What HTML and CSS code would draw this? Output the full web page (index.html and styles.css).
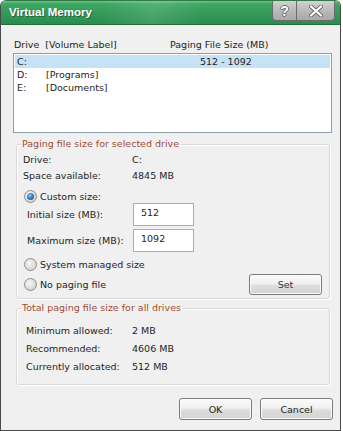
FILE: index.html
```html
<!DOCTYPE html>
<html lang="en">
<head>
<meta charset="UTF-8">
<title>Virtual Memory</title>
<link rel="stylesheet" href="styles.css">
</head>
<body>
<div class="window">
  <div class="titlebar">
    <span class="title">Virtual Memory</span>
    <div class="caption-btns">
      <span class="cbtn help">?</span>
      <span class="cbtn close">
        <svg width="16" height="12" viewBox="0 0 16 12">
          <path d="M3 1.5 L13 10.5 M13 1.5 L3 10.5" stroke="#6a6a6a" stroke-width="4" stroke-linecap="round"/>
          <path d="M3 1.5 L13 10.5 M13 1.5 L3 10.5" stroke="#fff" stroke-width="2.2" stroke-linecap="round"/>
        </svg>
      </span>
    </div>
  </div>

  <div class="client">
    <div class="list-head">
      <span class="col-drive">Drive&nbsp; [Volume Label]</span>
      <span class="col-size">Paging File Size (MB)</span>
    </div>
    <div class="listbox">
      <div class="row selected"><span class="c-drive">C:</span><span class="c-label"></span><span class="c-size">512 - 1092</span></div>
      <div class="row"><span class="c-drive">D:</span><span class="c-label">[Programs]</span><span class="c-size"></span></div>
      <div class="row"><span class="c-drive">E:</span><span class="c-label">[Documents]</span><span class="c-size"></span></div>
    </div>

    <fieldset class="group group-drive">
      <legend>Paging file size for selected drive</legend>
      <div class="info-row first"><span class="info-label">Drive:</span><span>C:</span></div>
      <div class="info-row"><span class="info-label">Space available:</span><span>4845 MB</span></div>
      <div class="radio-row custom"><span class="radio checked"></span><span>Custom size:</span></div>
      <div class="field-row"><span class="field-label">Initial size (MB):</span><span class="textbox">512</span></div>
      <div class="field-row second"><span class="field-label">Maximum size (MB):</span><span class="textbox">1092</span></div>
      <div class="radio-row system"><span class="radio"></span><span>System managed size</span></div>
      <div class="radio-row nopage">
        <span class="radio"></span><span>No paging file</span>
        <span class="button set-btn">Set</span>
      </div>
    </fieldset>

    <fieldset class="group group-total">
      <legend>Total paging file size for all drives</legend>
      <div class="total-row first"><span class="total-label">Minimum allowed:</span><span>2 MB</span></div>
      <div class="total-row"><span class="total-label">Recommended:</span><span>4606 MB</span></div>
      <div class="total-row"><span class="total-label">Currently allocated:</span><span>512 MB</span></div>
    </fieldset>

    <div class="dialog-buttons">
      <span class="button">OK</span>
      <span class="button">Cancel</span>
    </div>
  </div>
</div>
</body>
</html>
```

FILE: styles.css
```css
body {
  margin: 0;
  padding: 0;
  background-color: #ffffff;
  font-family: "DejaVu Sans", sans-serif;
  font-size: 9.5px;
  color: #1e1e1e;
}

.window {
  width: 341px;
  height: 431px;
  box-sizing: border-box;
  border: 1px solid #4a4a4a;
  border-top-color: #2f7a47;
  border-radius: 6px 6px 0 0;
  background-color: #f0f0f0;
  overflow: hidden;
}

.titlebar {
  height: 23px;
  display: flex;
  align-items: flex-start;
  justify-content: space-between;
  background: linear-gradient(100deg, rgba(255,255,255,0) 30%, rgba(255,255,255,0.12) 45%, rgba(255,255,255,0) 60%),
              linear-gradient(to bottom, #6cc58a 0%, #3ea862 12%, #33995a 55%, #2c8c4f 100%);
  border-bottom: 1px solid #23703f;
}

.title {
  font-family: "Liberation Sans", sans-serif;
  font-weight: bold;
  font-size: 11.5px;
  color: #ffffff;
  padding: 5px 0 0 8px;
  text-shadow: 1px 1px 0 rgba(0, 0, 0, 0.35);
}

.caption-btns {
  display: flex;
  margin-right: 5px;
}

.cbtn {
  height: 20px;
  box-sizing: border-box;
  display: flex;
  align-items: center;
  justify-content: center;
  background: linear-gradient(to bottom, #d2d2d2 0%, #b9b9b9 50%, #a9a9a9 100%);
  border: 1px solid #6b6b6b;
  border-top: none;
}

.help {
  width: 25px;
  border-radius: 0 0 0 4px;
  font-family: "Liberation Sans", sans-serif;
  font-weight: bold;
  font-size: 14px;
  color: #ffffff;
  text-shadow: -1px 0 #6a6a6a, 1px 0 #6a6a6a, 0 -1px #6a6a6a, 0 1px #6a6a6a;
}

.close {
  width: 38px;
  border-left: none;
  border-radius: 0 0 4px 0;
}

.client {
  padding: 14px 8px 0 12px;
}

.list-head {
  display: flex;
  height: 12px;
  line-height: 12px;
  padding-left: 1px;
}

.col-drive {
  width: 156px;
}

.listbox {
  margin-top: 2px;
  height: 80px;
  box-sizing: border-box;
  border: 1px solid #8c9db0;
  background-color: #ffffff;
  padding-top: 1px;
}

.row {
  display: flex;
  height: 13px;
  line-height: 13px;
  margin: 0 1px;
}

.row.selected {
  background-color: #c6e2f5;
}

.c-drive {
  width: 29px;
  padding-left: 2px;
}

.c-label {
  width: 154px;
}

.group {
  margin: 5px 2px 0 3px;
  padding: 0;
  border: 1px solid #dadada;
  border-radius: 3px;
  box-shadow: inset 1px 1px 0 #ffffff, 1px 1px 0 #ffffff;
}

.group legend {
  margin-left: 4px;
  padding: 0 1px;
  line-height: 12px;
  color: #9c4a30;
}

.info-row {
  display: flex;
  height: 16px;
  line-height: 16px;
  padding-left: 6px;
}

.info-row.first {
  margin-top: 2px;
}

.info-label {
  width: 109px;
}

.radio-row {
  display: flex;
  align-items: center;
  padding-left: 7px;
  height: 16px;
}

.radio-row.custom {
  height: 14px;
  margin-top: 5px;
}

.radio-row.system {
  margin-top: 4px;
}

.radio-row.nopage {
  height: 21px;
  margin-top: 2px;
  margin-bottom: 3px;
}

.radio {
  width: 11px;
  height: 11px;
  border: 1px solid #8e8e8e;
  border-radius: 50%;
  background: radial-gradient(circle at 40% 35%, #f6f6f6 0%, #d6d6d6 70%, #c4c4c4 100%);
  margin-right: 3px;
  position: relative;
}

.radio.checked::after {
  content: "";
  position: absolute;
  left: 2px;
  top: 2px;
  width: 7px;
  height: 7px;
  border-radius: 50%;
  background: radial-gradient(circle at 40% 35%, #8cc8f0 0%, #2d73b8 55%, #1b4f8c 100%);
}

.field-row {
  display: flex;
  align-items: center;
  height: 23px;
  padding-left: 10px;
}

.field-row.second {
  margin-top: 3px;
}

.field-label {
  width: 106px;
}

.textbox {
  width: 61px;
  height: 23px;
  box-sizing: border-box;
  border: 1px solid #a7adb6;
  background-color: #ffffff;
  padding: 3px 0 0 7px;
  line-height: 12px;
}

.button {
  width: 73px;
  height: 21px;
  box-sizing: border-box;
  display: flex;
  align-items: center;
  justify-content: center;
  border: 1px solid #7a7a7a;
  border-radius: 3px;
  background: linear-gradient(to bottom, #fbfbfb 0%, #f0f0f0 45%, #dedede 55%, #d2d2d2 100%);
  box-shadow: inset 0 0 0 1px #fcfcfc;
}

.set-btn {
  margin-left: auto;
  margin-right: 7px;
  color: #23386a;
}

.total-row {
  display: flex;
  height: 18px;
  line-height: 18px;
  padding-left: 9px;
}

.total-row.first {
  margin-top: 8px;
}

.total-row:last-child {
  margin-bottom: 8px;
}

.total-label {
  width: 106px;
}

.group-total {
  margin-top: 3px;
}

.dialog-buttons {
  display: flex;
  justify-content: flex-end;
  gap: 8px;
  margin-top: 13px;
  margin-right: -1px;
}

.dialog-buttons .button {
  height: 22px;
}
```
